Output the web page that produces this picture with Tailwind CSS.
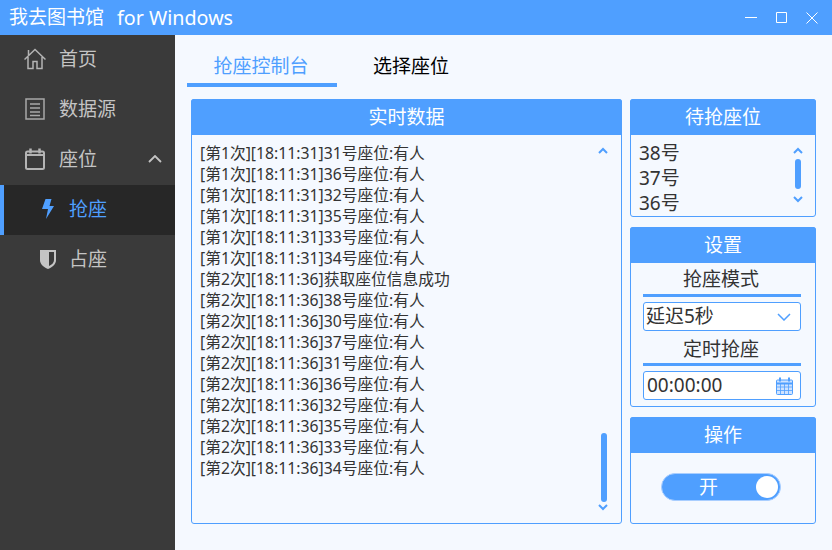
<!DOCTYPE html>
<html lang="zh-CN">
<head>
    <meta charset="UTF-8">
    <title>我去图书馆 for Windows</title>
    <script src="https://cdn.jsdelivr.net/npm/@tailwindcss/browser@4"></script>
</head>
<body class="w-[832px] h-[550px] overflow-hidden bg-[#f5f9ff] font-['Noto_Sans','Noto_Sans_CJK_SC',sans-serif]">
    <!-- Title bar -->
    <header class="h-[35px] bg-[#4f9fff] text-white flex items-center pl-[9px] pr-[14px]">
        <span class="text-[19px] leading-none">我去图书馆</span>
        <span class="text-[19.7px] leading-none ml-[13px]">for Windows</span>
        <div class="ml-auto flex items-center gap-[18px]">
            <svg width="13" height="13" viewBox="0 0 13 13" fill="none" stroke="white"><path d="M0 6.500h12"/></svg>
            <svg width="12" height="12" viewBox="0 0 12 12" fill="none" stroke="white"><path d="M.5.5h10v10H.5z"/></svg>
            <svg width="12" height="12" viewBox="0 0 12 12" fill="none" stroke="white"><path d="M.5.5l11 11M11.500.5l-11 11"/></svg>
        </div>
    </header>

    <div class="flex h-[515px]">
        <!-- Sidebar -->
        <nav class="w-[175px] bg-[#3a3a3a] text-[#c4c4c4] text-[19px]">
            <div class="h-[50px] pb-[2px] flex items-center pl-[24px] gap-[13px]">
                <svg width="22" height="22" viewBox="0 0 22 22" fill="none" stroke="#b4b4b4" stroke-width="1.500"><path d="M.5 11.500L11 1.500l10.500 10M4 9v11.500h5v-7h4v7h5V9M4.500 2v5"/></svg>
                <span>首页</span>
            </div>
            <div class="h-[50px] pb-[2px] flex items-center pl-[25px] gap-[14px]">
                <svg width="20" height="22" viewBox="0 0 20 22" fill="none" stroke="#a8a8a8" stroke-width="1.500"><path d="M1 1h18v20H1zM5 6h10M5 10h10M5 14h10M5 17.500h10"/></svg>
                <span>数据源</span>
            </div>
            <div class="h-[50px] pb-[2px] flex items-center pl-[25px] gap-[14px]">
                <svg width="20" height="22" viewBox="0 0 20 22" fill="none" stroke="#b4b4b4" stroke-width="2"><rect x="1" y="3.500" width="18" height="17.500" rx="1.500"/><path d="M1 7h18"/><path d="M5.500 0.500v5M14.500 0.500v5" stroke-width="2.500"/></svg>
                <span>座位</span>
                <svg class="ml-[37px]" width="14" height="8" viewBox="0 0 14 8" fill="none" stroke="#c4c4c4" stroke-width="1.800"><path d="M1 7l6-6 6 6"/></svg>
            </div>
            <div class="h-[50px] pb-[2px] flex items-center bg-[#272727] border-l-4 border-[#4f9fff] pl-[38px] gap-[15px] text-[#4f9fff]">
                <svg width="12" height="20" viewBox="0 0 12 20" fill="#4f9fff"><path d="M3.500 0h6L7.500 7H12L4 20l2-10H0z"/></svg>
                <span>抢座</span>
            </div>
            <div class="h-[50px] pb-[2px] flex items-center pl-[40px] gap-[13px]">
                <svg width="16" height="19" viewBox="0 0 16 19"><path d="M0 0h16v10c0 4-3 7-8 9-5-2-8-5-8-9z" fill="#c4c4c4"/><path d="M9 2h5v8c0 2.500-1.800 4.500-5 6z" fill="#3a3a3a"/></svg>
                <span>占座</span>
            </div>
        </nav>

        <!-- Main -->
        <main class="flex-1 flex flex-col pl-[12px] pr-[16px]">
            <div class="flex h-[48px] text-[19px] pt-[17px]">
                <div class="w-[150px] h-[35px] pr-[2px] border-b-4 border-[#4f9fff] text-[#4f9fff] text-center">抢座控制台</div>
                <div class="w-[150px] text-black text-center -ml-[1px]">选择座位</div>
            </div>
            <div class="flex gap-[8px] pl-[4px] mt-[16px] h-[425px]">
                <!-- Live data -->
                <section class="w-[431px] border border-[#4f9fff] rounded-[3px] flex flex-col relative">
                    <h2 class="h-[36px] shrink-0 -mx-px -mt-px bg-[#4f9fff] text-white text-[19px] rounded-t-[3px] flex items-center justify-center font-normal">实时数据</h2>
                    <div class="pl-[8px] pt-[8px] text-[15.75px] leading-[21px] text-[#333]">
                        <p>[第1次][18:11:31]31号座位:有人</p>
                        <p>[第1次][18:11:31]36号座位:有人</p>
                        <p>[第1次][18:11:31]32号座位:有人</p>
                        <p>[第1次][18:11:31]35号座位:有人</p>
                        <p>[第1次][18:11:31]33号座位:有人</p>
                        <p>[第1次][18:11:31]34号座位:有人</p>
                        <p>[第2次][18:11:36]获取座位信息成功</p>
                        <p>[第2次][18:11:36]38号座位:有人</p>
                        <p>[第2次][18:11:36]30号座位:有人</p>
                        <p>[第2次][18:11:36]37号座位:有人</p>
                        <p>[第2次][18:11:36]31号座位:有人</p>
                        <p>[第2次][18:11:36]36号座位:有人</p>
                        <p>[第2次][18:11:36]32号座位:有人</p>
                        <p>[第2次][18:11:36]35号座位:有人</p>
                        <p>[第2次][18:11:36]33号座位:有人</p>
                        <p>[第2次][18:11:36]34号座位:有人</p>
                    </div>
                    <svg class="absolute top-[47px] left-[405px]" width="12" height="8" viewBox="0 0 12 8" fill="none" stroke="#4f9fff" stroke-width="2"><path d="M2 6l4-4 4 4"/></svg>
                    <div class="absolute top-[333px] left-[409px] w-[6px] h-[69px] rounded-full bg-[#4f9fff]"></div>
                    <svg class="absolute top-[403px] left-[405px]" width="12" height="8" viewBox="0 0 12 8" fill="none" stroke="#4f9fff" stroke-width="2"><path d="M2 2l4 4 4-4"/></svg>
                </section>

                <!-- Right column -->
                <div class="w-[186px] flex flex-col gap-[10px]">
                    <section class="h-[118px] border border-[#4f9fff] rounded-[3px] relative">
                        <h2 class="h-[36px] -mx-px -mt-px bg-[#4f9fff] text-white text-[19px] rounded-t-[3px] flex items-center justify-center font-normal">待抢座位</h2>
                        <div class="pl-[8px] pt-[6px] text-[19px] leading-[25px] text-[#333]">
                            <p>38号</p>
                            <p>37号</p>
                            <p>36号</p>
                        </div>
                        <svg class="absolute top-[47px] left-[161px]" width="12" height="7" viewBox="0 0 12 7" fill="none" stroke="#4f9fff" stroke-width="2"><path d="M2 6l4-4 4 4"/></svg>
                        <div class="absolute top-[59px] left-[164px] w-[6px] h-[30px] rounded-full bg-[#4f9fff]"></div>
                        <svg class="absolute top-[96px] left-[161px]" width="12" height="7" viewBox="0 0 12 7" fill="none" stroke="#4f9fff" stroke-width="2"><path d="M2 1l4 4 4-4"/></svg>
                    </section>

                    <section class="h-[180px] border border-[#4f9fff] rounded-[3px]">
                        <h2 class="h-[36px] -mx-px -mt-px bg-[#4f9fff] text-white text-[19px] rounded-t-[3px] flex items-center justify-center font-normal">设置</h2>
                        <div class="pl-[12px] pr-[14px] text-[19px] text-[#333]">
                            <div class="h-[34px] pr-[2px] border-b-[3px] border-[#4f9fff] text-center leading-[32px]">抢座模式</div>
                            <div class="mt-[5px] h-[29px] bg-white border border-[#4f9fff] rounded-[3px] flex items-center pl-[2px] pr-[9px]">
                                <span>延迟5秒</span>
                                <svg class="ml-auto" width="14" height="8" viewBox="0 0 14 8" fill="none" stroke="#4f9fff" stroke-width="1.500"><path d="M1 1l6 6 6-6"/></svg>
                            </div>
                            <div class="h-[35px] pr-[2px] border-b-[3px] border-[#4f9fff] text-center leading-[36px]">定时抢座</div>
                            <div class="mt-[5px] h-[29px] bg-white border border-[#4f9fff] rounded-[3px] flex items-center pl-[3px] pr-[7px]">
                                <span>00:00:00</span>
                                <svg class="ml-auto" width="17" height="18" viewBox="0 0 17 18" fill="none" stroke="#4f9fff"><rect x="0.500" y="3" width="16" height="14.500" rx="1" fill="#cfe3ff"/><path d="M0.500 6.500h16" stroke-width="2"/><path d="M4 0.500v4M13 0.500v4" stroke-width="2"/><path d="M0.500 10h16M0.500 13.500h16M4.500 6.500v11M8.500 6.500v11M12.500 6.500v11" stroke-width="0.800"/></svg>
                            </div>
                        </div>
                    </section>

                    <section class="h-[107px] border border-[#4f9fff] rounded-[3px]">
                        <h2 class="h-[36px] -mx-px -mt-px bg-[#4f9fff] text-white text-[19px] rounded-t-[3px] flex items-center justify-center font-normal">操作</h2>
                        <div class="pt-[20px] pl-[30px]">
                            <div class="relative w-[120px] h-[28px] rounded-full bg-[#4f9fff] border border-[#a9ceff] text-white text-[19px] leading-[26px] pl-[37px]">
                                开
                                <div class="absolute top-[2px] right-[2px] w-[22px] h-[22px] rounded-full bg-white"></div>
                            </div>
                        </div>
                    </section>
                </div>
            </div>
        </main>
    </div>
</body>
</html>
